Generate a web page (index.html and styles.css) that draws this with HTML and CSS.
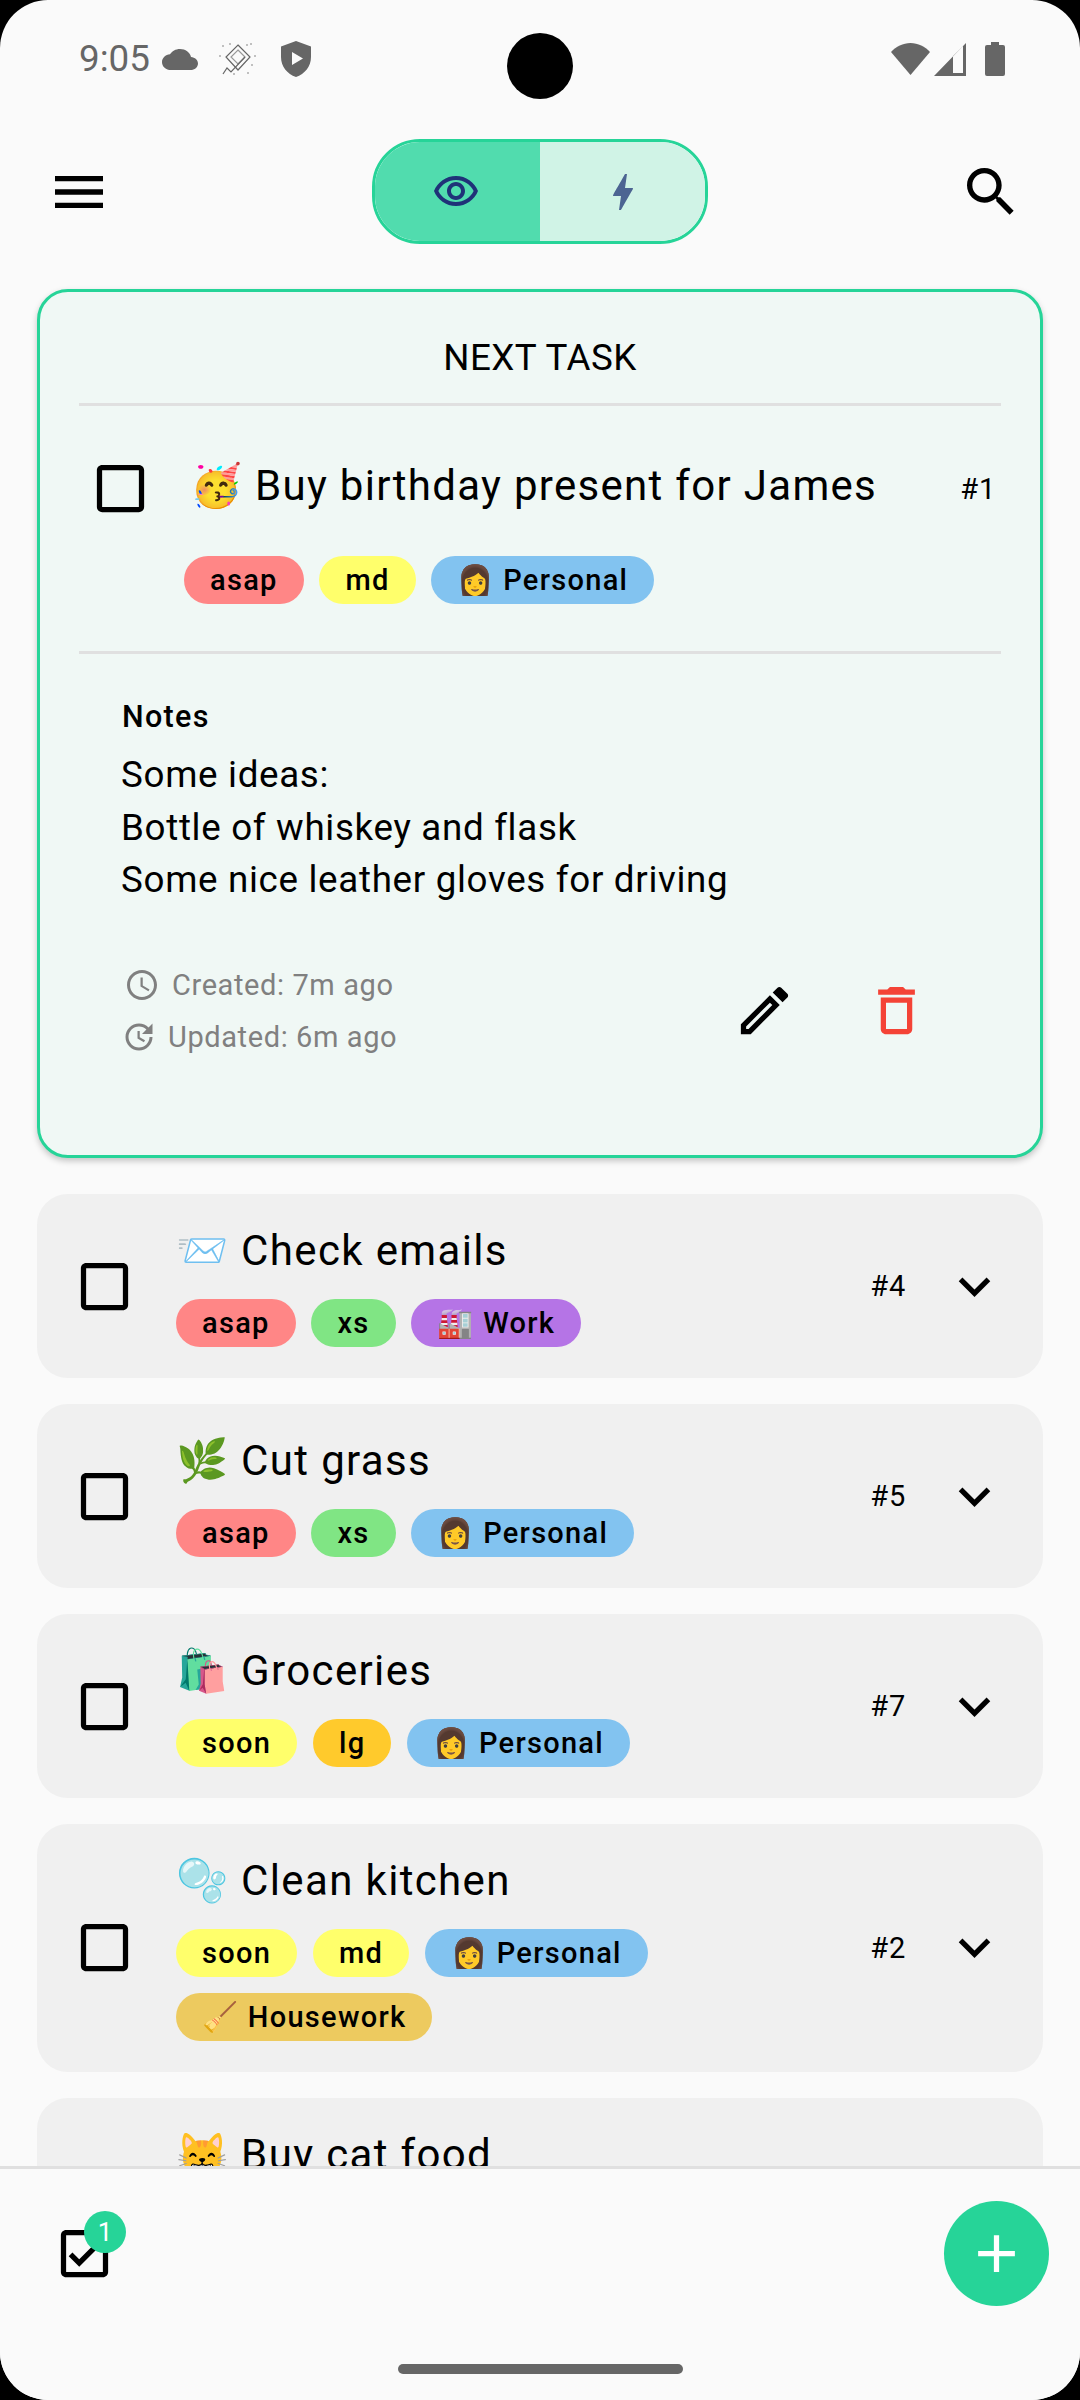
FILE: index.html
```html
<!DOCTYPE html>
<html lang="en">
<head>
<meta charset="utf-8">
<title>Tasks</title>
<link rel="stylesheet" href="styles.css">
</head>
<body>
<div class="screen">
  <div class="camera"></div>
  <header class="status">
    <div class="status-left">
      <span class="time">9:05</span>
      <svg class="st-cloud" viewBox="0 4 24 16" preserveAspectRatio="none"><path d="M19.35 10.04C18.67 6.59 15.64 4 12 4 9.11 4 6.6 5.64 5.35 8.04 2.34 8.36 0 10.91 0 14c0 3.31 2.69 6 6 6h13c2.76 0 5-2.24 5-5 0-2.64-2.05-4.78-4.65-4.96z"/></svg>
      <svg class="st-diamond" viewBox="0 0 39 34"><g fill="none" stroke="#666" stroke-width="1.2"><path d="M20 3 32 15 20 28 8 15z"/><path d="M20 8 27 15 20 22 13 15z" stroke="#999"/><path d="M5 32 9 26 13 30 27 15"/></g><g fill="#777"><circle cx="2" cy="14" r=".8"/><circle cx="5" cy="4" r=".8"/><circle cx="12" cy="2" r=".8"/><circle cx="29" cy="3" r=".8"/><circle cx="33" cy="2" r=".8"/><circle cx="37" cy="14" r=".8"/><circle cx="34" cy="23" r=".8"/><circle cx="30" cy="31" r=".8"/><circle cx="16" cy="32" r=".8"/></g></svg>
      <svg class="st-shield" viewBox="0 0 30 36"><path fill="#666" fill-rule="evenodd" d="M15 0 30 5.500V16c0 9.500-6.200 17-15 20C6.200 33 0 25.500 0 16V5.500zM11 11v13l11-6.500z"/></svg>
    </div>
    <div class="status-right">
      <svg class="st-wifi" viewBox="0 0 39 32"><path fill="#666" d="M19.500 32 0 9C5 3.500 12 0 19.500 0S34 3.500 39 9z"/></svg>
      <svg class="st-signal" viewBox="0 0 32 33"><path fill="#666" fill-rule="evenodd" d="M32 0v33H0zM19 13 19 30H29V3z"/></svg>
      <svg class="st-battery" viewBox="0 0 20 34"><path fill="#666" d="M6 0h8v3h4a2 2 0 0 1 2 2v27a2 2 0 0 1-2 2H2a2 2 0 0 1-2-2V5a2 2 0 0 1 2-2h4z"/></svg>
    </div>
  </header>

  <nav class="appbar">
    <svg class="icon" viewBox="0 0 24 24"><path d="M3 18h18v-2H3v2zm0-5h18v-2H3v2zm0-7v2h18V6H3z"/></svg>
    <div class="toggle">
      <div class="seg seg-on">
        <svg class="seg-eye" viewBox="0 0 24 24"><path d="M12 6c3.790 0 7.170 2.130 8.820 5.500C19.170 14.870 15.790 17 12 17s-7.170-2.130-8.820-5.500C4.830 8.130 8.210 6 12 6m0-2C7 4 2.730 7.110 1 11.500 2.730 15.890 7 19 12 19s9.270-3.110 11-7.500C21.270 7.110 17 4 12 4zm0 5c1.380 0 2.500 1.120 2.500 2.500S13.380 14 12 14s-2.500-1.120-2.500-2.500S10.620 9 12 9m0-2c-2.480 0-4.500 2.020-4.500 4.500S9.520 16 12 16s4.500-2.020 4.500-4.500S14.480 7 12 7z"/></svg>
      </div>
      <div class="seg seg-off">
        <svg class="seg-bolt" viewBox="0 0 24 24"><path d="M11 21h-1l1-7H7.500c-.58 0-.57-.32-.38-.66.19-.34.05-.08.07-.12C8.480 10.940 10.420 7.540 13 3h1l-1 7h3.500c.49 0 .56.33.47.51l-.07.15C12.960 17.550 11 21 11 21z"/></svg>
      </div>
    </div>
    <svg class="icon" viewBox="0 0 24 24"><path d="M15.500 14h-.79l-.28-.27C15.410 12.590 16 11.110 16 9.500 16 5.910 13.090 3 9.500 3S3 5.910 3 9.500 5.910 16 9.500 16c1.610 0 3.090-.59 4.230-1.570l.27.28v.79l5 4.990L20.490 19l-4.990-5zm-6 0C7.010 14 5 11.990 5 9.500S7.010 5 9.500 5 14 7.010 14 9.500 11.990 14 9.500 14z"/></svg>
  </nav>

  <main class="list">
    <section class="next">
      <h2 class="next-title">NEXT TASK</h2>
      <div class="rule"></div>
      <div class="next-head">
        <svg class="icon check" viewBox="0 0 24 24"><path d="M19 5v14H5V5h14m0-2H5c-1.100 0-2 .9-2 2v14c0 1.100.9 2 2 2h14c1.100 0 2-.9 2-2V5c0-1.100-.9-2-2-2z"/></svg>
        <div class="next-name">🥳 Buy birthday present for James</div>
        <div class="num next-num">#1</div>
      </div>
      <div class="chips next-chips">
        <span class="chip red">asap</span>
        <span class="chip yellow">md</span>
        <span class="chip blue">👩 Personal</span>
      </div>
      <div class="rule"></div>
      <div class="notes">
        <div class="notes-label">Notes</div>
        <div class="notes-body">Some ideas:<br>Bottle of whiskey and flask<br>Some nice leather gloves for driving</div>
        <div class="meta">
          <div class="stamps">
            <div class="stamp">
              <svg class="stamp-icon" viewBox="0 0 24 24"><path d="M11.990 2C6.470 2 2 6.480 2 12s4.470 10 9.990 10C17.520 22 22 17.520 22 12S17.520 2 11.990 2zM12 20c-4.420 0-8-3.580-8-8s3.580-8 8-8 8 3.580 8 8-3.580 8-8 8zm.5-13H11v6l5.250 3.150.75-1.230-4.500-2.670z"/></svg>
              <span>Created: 7m ago</span>
            </div>
            <div class="stamp stamp-up">
              <svg class="stamp-icon" viewBox="0 0 24 24"><path d="M11 8v5l4.250 2.520.77-1.280-3.520-2.090V8zm10 2V3l-2.640 2.640C16.740 4.010 14.490 3 12 3c-4.970 0-9 4.030-9 9s4.030 9 9 9 9-4.030 9-9h-2c0 3.860-3.140 7-7 7s-7-3.140-7-7 3.140-7 7-7c1.930 0 3.680.79 4.950 2.050L14 10h7z"/></svg>
              <span>Updated: 6m ago</span>
            </div>
          </div>
          <div class="actions">
            <svg class="icon" viewBox="0 0 24 24"><path d="M3 17.250V21h3.750L17.810 9.940l-3.750-3.750L3 17.250zM5.920 19H5v-.92l9.060-9.060.92.92L5.920 19zM20.710 7.040c.39-.39.39-1.020 0-1.410l-2.340-2.340c-.2-.2-.45-.29-.71-.29s-.51.1-.7.29l-1.830 1.830 3.750 3.750 1.830-1.830z"/></svg>
            <svg class="icon trash" viewBox="0 0 24 24"><path d="M6 19c0 1.100.9 2 2 2h8c1.100 0 2-.9 2-2V7H6v12zM8 9h8v10H8V9zm7.500-5l-1-1h-5l-1 1H5v2h14V4z"/></svg>
          </div>
        </div>
      </div>
    </section>

    <article class="row">
      <svg class="icon" viewBox="0 0 24 24"><path d="M19 5v14H5V5h14m0-2H5c-1.100 0-2 .9-2 2v14c0 1.100.9 2 2 2h14c1.100 0 2-.9 2-2V5c0-1.100-.9-2-2-2z"/></svg>
      <div class="row-main">
        <div class="row-name">📨 Check emails</div>
        <div class="chips"><span class="chip red">asap</span><span class="chip green">xs</span><span class="chip purple">🏭 Work</span></div>
      </div>
      <div class="num">#4</div>
      <svg class="icon" viewBox="0 0 24 24"><path d="M16.590 8.590 12 13.170 7.410 8.590 6 10l6 6 6-6z"/></svg>
    </article>

    <article class="row">
      <svg class="icon" viewBox="0 0 24 24"><path d="M19 5v14H5V5h14m0-2H5c-1.100 0-2 .9-2 2v14c0 1.100.9 2 2 2h14c1.100 0 2-.9 2-2V5c0-1.100-.9-2-2-2z"/></svg>
      <div class="row-main">
        <div class="row-name">🌿 Cut grass</div>
        <div class="chips"><span class="chip red">asap</span><span class="chip green">xs</span><span class="chip blue">👩 Personal</span></div>
      </div>
      <div class="num">#5</div>
      <svg class="icon" viewBox="0 0 24 24"><path d="M16.590 8.590 12 13.170 7.410 8.590 6 10l6 6 6-6z"/></svg>
    </article>

    <article class="row">
      <svg class="icon" viewBox="0 0 24 24"><path d="M19 5v14H5V5h14m0-2H5c-1.100 0-2 .9-2 2v14c0 1.100.9 2 2 2h14c1.100 0 2-.9 2-2V5c0-1.100-.9-2-2-2z"/></svg>
      <div class="row-main">
        <div class="row-name">🛍️ Groceries</div>
        <div class="chips"><span class="chip yellow">soon</span><span class="chip amber">lg</span><span class="chip blue">👩 Personal</span></div>
      </div>
      <div class="num">#7</div>
      <svg class="icon" viewBox="0 0 24 24"><path d="M16.590 8.590 12 13.170 7.410 8.590 6 10l6 6 6-6z"/></svg>
    </article>

    <article class="row">
      <svg class="icon" viewBox="0 0 24 24"><path d="M19 5v14H5V5h14m0-2H5c-1.100 0-2 .9-2 2v14c0 1.100.9 2 2 2h14c1.100 0 2-.9 2-2V5c0-1.100-.9-2-2-2z"/></svg>
      <div class="row-main">
        <div class="row-name">🫧 Clean kitchen</div>
        <div class="chips"><span class="chip yellow">soon</span><span class="chip yellow">md</span><span class="chip blue">👩 Personal</span><span class="chip gold">🧹 Housework</span></div>
      </div>
      <div class="num">#2</div>
      <svg class="icon" viewBox="0 0 24 24"><path d="M16.590 8.590 12 13.170 7.410 8.590 6 10l6 6 6-6z"/></svg>
    </article>

    <article class="row row-peek">
      <div class="row-main">
        <div class="row-name">😸 Buy cat food</div>
      </div>
    </article>
  </main>

  <footer class="footer">
    <div class="footer-row">
      <div class="done">
        <svg class="icon" viewBox="0 0 24 24"><path d="M19 3H5c-1.110 0-2 .9-2 2v14c0 1.100.89 2 2 2h14c1.110 0 2-.9 2-2V5c0-1.100-.89-2-2-2zm0 16H5V5h14v14zM17.990 9l-1.410-1.420-6.590 6.590-2.580-2.570-1.420 1.410 4 3.990z"/></svg>
        <span class="badge">1</span>
      </div>
      <div class="fab"><svg class="icon fab-plus" viewBox="0 0 24 24"><path d="M19 13h-6v6h-2v-6H5v-2h6V5h2v6h6v2z"/></svg></div>
    </div>
    <div class="home-bar"></div>
  </footer>
</div>
</body>
</html>
```

FILE: styles.css
```css
* { box-sizing: border-box; }
html, body { margin: 0; padding: 0; background: #000; }
body { font-family: Roboto, "Noto Sans", sans-serif; color: #000; }
.screen {
  position: relative;
  width: 1080px;
  height: 2400px;
  background: #fafafa;
  border-radius: 48px;
  overflow: hidden;
  display: flex;
  flex-direction: column;
}
.camera {
  position: absolute;
  left: 507px;
  top: 33px;
  width: 66px;
  height: 66px;
  border-radius: 50%;
  background: #000;
}
.icon { display: block; width: 63px; height: 63px; flex: none; fill: #000; }

.status {
  height: 118px;
  flex: none;
  display: flex;
  align-items: center;
  justify-content: space-between;
  padding: 0 75px 0 79px;
}
.status-left, .status-right { display: flex; align-items: center; }
.time { font-size: 36.75px; line-height: 40px; color: #666; width: 83px; }
.st-cloud { width: 36px; height: 21px; fill: #666; }
.st-diamond { width: 39px; height: 34px; margin-left: 20px; }
.st-shield { width: 30px; height: 36px; margin-left: 24px; }
.st-wifi { width: 39px; height: 32px; margin-right: 4px; }
.st-signal { width: 32px; height: 33px; margin-right: 19px; }
.st-battery { width: 20px; height: 34px; }

.appbar {
  height: 147px;
  flex: none;
  display: flex;
  align-items: center;
  justify-content: space-between;
  padding: 0 57px 0 47px;
}
.appbar .icon { width: 64px; height: 64px; }
.toggle {
  width: 336px;
  height: 105px;
  display: flex;
  border: 3px solid #26d498;
  border-radius: 48px;
  overflow: hidden;
  margin-left: 10px;
}
.seg { flex: 1; display: flex; align-items: center; justify-content: center; }
.seg-on { background: #51dcae; }
.seg-off { background: #d0f3e6; }
.seg-eye { width: 48px; height: 48px; fill: #1f3278; margin-right: 3px; }
.seg-bolt { width: 48px; height: 48px; fill: #4c6492; }

.list {
  flex: 1;
  min-height: 0;
  overflow: hidden;
  padding: 24px 37px 0;
  display: flex;
  flex-direction: column;
  gap: 26px;
}
.next {
  flex: none;
  height: 869px;
  margin-bottom: 10px;
  background: #f0f8f5;
  border: 3px solid #26d498;
  border-radius: 31px;
  box-shadow: 0 3px 6px rgba(0, 0, 0, .22);
  padding: 0 39px;
}
.next-title {
  margin: 0;
  padding: 41px 0 20px;
  font-size: 36.75px;
  line-height: 50px;
  font-weight: 400;
  text-align: center;
  letter-spacing: .5px;
}
.rule { height: 3px; background: #e0e0e0; }
.next-head {
  display: flex;
  align-items: center;
  padding: 51px 5px 0 10px;
}
.next-name { flex: 1; margin-left: 38px; font-size: 42px; line-height: 54px; letter-spacing: 1.3px; margin-top: -5px; white-space: nowrap; }
.num { font-size: 29px; line-height: 40px; letter-spacing: .8px; flex: none; }
.next-chips { margin: 36px 0 47px 105px; }

.chips { display: flex; flex-wrap: wrap; gap: 15.75px; }
.chip {
  height: 48px;
  display: flex;
  align-items: center;
  padding: 0 26px;
  border-radius: 24px;
  font-size: 29px;
  font-weight: 480;
  letter-spacing: 1.3px;
  white-space: nowrap;
}
.red { background: #ff8686; }
.yellow { background: #ffff6b; }
.blue { background: #82c3f0; }
.green { background: #80e584; }
.purple { background: #b574e6; }
.amber { background: #ffca2c; }
.gold { background: #edca5f; }

.notes { padding: 46px 0 0 42px; }
.notes-label { font-size: 30.5px; line-height: 34px; font-weight: 500; letter-spacing: 1.3px; margin-left: 1px; }
.notes-body { margin-top: 15px; font-size: 36.75px; line-height: 52.5px; letter-spacing: .68px; }
.meta { display: flex; align-items: center; justify-content: space-between; margin-top: 52px; }
.stamps { display: flex; flex-direction: column; }
.stamp { display: flex; align-items: center; height: 52px; color: #808080; font-size: 29px; letter-spacing: .6px; gap: 12px; padding-left: 3px; }
.stamp-up { padding-left: 0; gap: 11px; }
.stamp-icon { width: 36px; height: 36px; fill: #808080; }
.actions { display: flex; gap: 69px; margin-right: 73px; }
.trash { fill: #f44336; }

.row {
  flex: none;
  display: flex;
  align-items: center;
  background: #f0f0f0;
  border-radius: 31px;
  padding: 28px 37px 31px 36px;
}
.row > .icon, .row > .num { margin-top: 3px; }
.row-main { flex: 1; margin-left: 40px; min-width: 0; }
.row-peek .row-main { margin-left: 103px; }
.row-name { font-size: 42px; line-height: 54px; letter-spacing: 1.35px; padding-top: 2px; margin-bottom: 21px; }
.row .num { margin-right: 37px; }

.footer {
  flex: none;
  height: 234px;
  border-top: 3px solid #e0e0e0;
  background: #fafafa;
  position: relative;
}
.footer-row {
  display: flex;
  align-items: center;
  justify-content: space-between;
  padding: 32px 31px 0 53px;
}
.done { position: relative; }
.badge {
  position: absolute;
  left: 31px;
  top: -11px;
  width: 42px;
  height: 42px;
  border-radius: 50%;
  background: #26d498;
  color: #fff;
  font-size: 26px;
  display: flex;
  align-items: center;
  justify-content: center;
}
.fab { width: 105px; height: 105px; border-radius: 50%; background: #26d498; display: flex; align-items: center; justify-content: center; }
.fab-plus { fill: #fff; }
.home-bar { width: 285px; height: 10px; border-radius: 5px; background: #666; margin: 58px auto 0; }
```
